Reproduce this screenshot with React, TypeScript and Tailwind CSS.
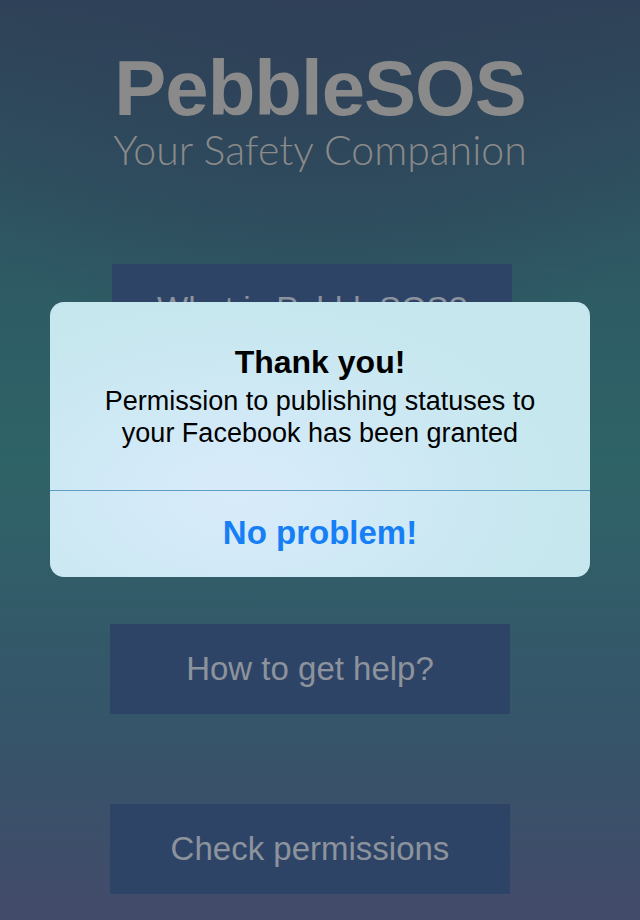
const BTN =
  "flex h-[90px] w-[400px] items-center justify-center bg-[#2e4467] text-[33px] text-[#8c939c]";

function MenuButton({ label }: { label: string }) {
  return <div className={BTN}>{label}</div>;
}

export default function App() {
  return (
    <div
      className="relative h-[920px] w-[640px] overflow-hidden bg-[linear-gradient(180deg,#2f4258_0%,#2e5a64_30%,#2e6367_50%,#36546a_80%,#434b6a_100%)]"
      style={{ fontFamily: '"Liberation Sans", Arial, sans-serif' }}
    >
      {/* darker navy glow at the top */}
      <div className="absolute inset-0 bg-[radial-gradient(ellipse_70%_40%_at_50%_0%,rgba(47,64,88,0.9),rgba(47,64,88,0)_100%)]" />

      <div className="relative flex flex-col items-center">
        {/* logo */}
        <div className="mt-[52px] text-[78px] font-bold leading-[72px] tracking-[-1px] text-[#8a8a8a]">
          PebbleSOS
        </div>
        <div
          className="mt-[4px] text-[41px] leading-[44px] text-[#8a8a8a]"
          style={{ fontFamily: 'Lato, "Liberation Sans", sans-serif', fontWeight: 300 }}
        >
          Your Safety Companion
        </div>

        {/* menu */}
        <div className="mt-[92px] flex flex-col gap-[90px] self-start pl-[110px]">
          <div className="ml-[2px]">
            <MenuButton label="What is PebbleSOS?" />
          </div>
          <MenuButton label="Settings" />
          <MenuButton label="How to get help?" />
          <MenuButton label="Check permissions" />
        </div>
      </div>

      {/* alert */}
      <div className="absolute left-[50px] top-[302px] w-[540px] overflow-hidden rounded-[14px] bg-[radial-gradient(ellipse_60%_70%_at_35%_70%,#d9ebfb_0%,#cfe9f5_50%,#c6e7ee_100%)]">
        <div className="flex h-[188px] flex-col items-center pt-[42px] text-center text-black">
          <div className="text-[32px] font-bold leading-[36px]">Thank you!</div>
          <div className="mt-[5px] text-[27px] leading-[32px]">
            Permission to publishing statuses to
            <br />
            your Facebook has been granted
          </div>
        </div>
        <div className="h-px bg-[#5e9ec4]" />
        <div className="flex h-[86px] items-center justify-center pb-[2px] text-[33px] font-bold text-[#167ff6]">
          No problem!
        </div>
      </div>
    </div>
  );
}
